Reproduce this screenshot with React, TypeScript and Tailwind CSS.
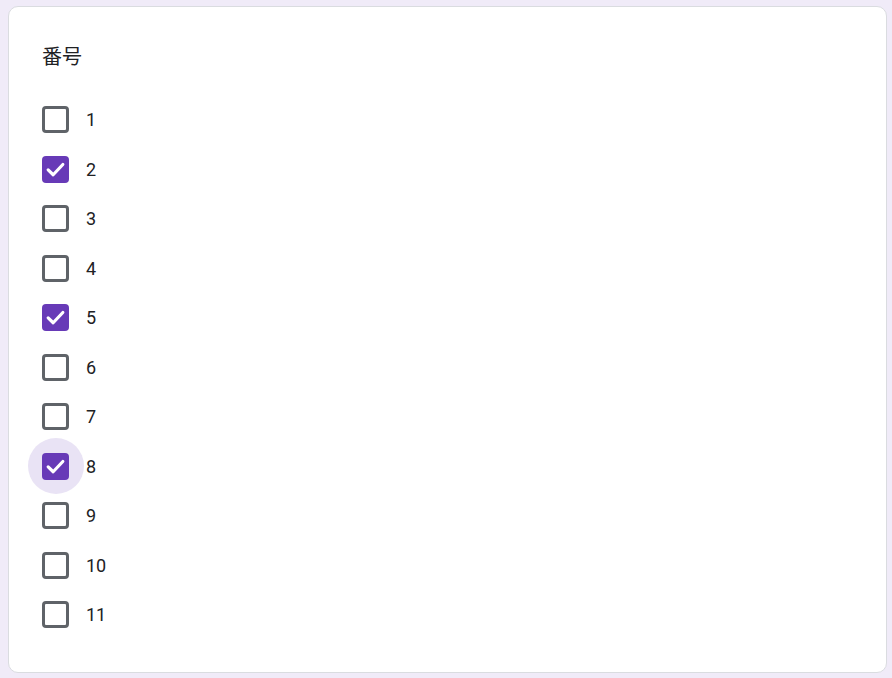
import React from "react";

const items = [
  { n: "1", c: false },
  { n: "2", c: true },
  { n: "3", c: false },
  { n: "4", c: false },
  { n: "5", c: true },
  { n: "6", c: false },
  { n: "7", c: false },
  { n: "8", c: true, hover: true },
  { n: "9", c: false },
  { n: "10", c: false },
  { n: "11", c: false },
];

function Box({ checked, hover }: { checked: boolean; hover?: boolean }) {
  return (
    <div className="relative w-[27px] h-[27px] flex items-center justify-center">
      {hover && (
        <div className="absolute left-1/2 top-1/2 -translate-x-1/2 -translate-y-1/2 w-[56px] h-[56px] rounded-full bg-[#e9e3f5]" />
      )}
      {checked ? (
        <div className="relative w-[27px] h-[27px] rounded-[4px] bg-[#673ab7] flex items-center justify-center">
          <svg width="21" height="21" viewBox="0 0 20 20" fill="none">
            <path d="M3 10.3 L7.8 15 L17 5.2" stroke="white" strokeWidth="3" strokeLinecap="round" strokeLinejoin="round" />
          </svg>
        </div>
      ) : (
        <div className="relative w-[27px] h-[27px] rounded-[4px] border-[3px] border-[#5f6368] bg-white" />
      )}
    </div>
  );
}

export default function App() {
  return (
    <div
      className="w-[892px] h-[678px] bg-[#f0ebf8] pt-[6px] pl-[8px] pr-[6px]"
      style={{ fontFamily: "Roboto, 'Noto Sans CJK JP', sans-serif" }}
    >
      <div className="w-[879px] h-[667px] bg-white border border-[#dadce0] rounded-[10px] pl-[33px] pt-[38px]">
        <div className="text-[20px] leading-[24px] text-[#202124]">番号</div>
        <div className="mt-[26px] flex flex-col">
          {items.map((it) => (
            <div key={it.n} className="h-[49.5px] flex items-center">
              <Box checked={it.c} hover={it.hover} />
              <span className="ml-[17px] text-[18px] text-[#202124]">{it.n}</span>
            </div>
          ))}
        </div>
      </div>
    </div>
  );
}
